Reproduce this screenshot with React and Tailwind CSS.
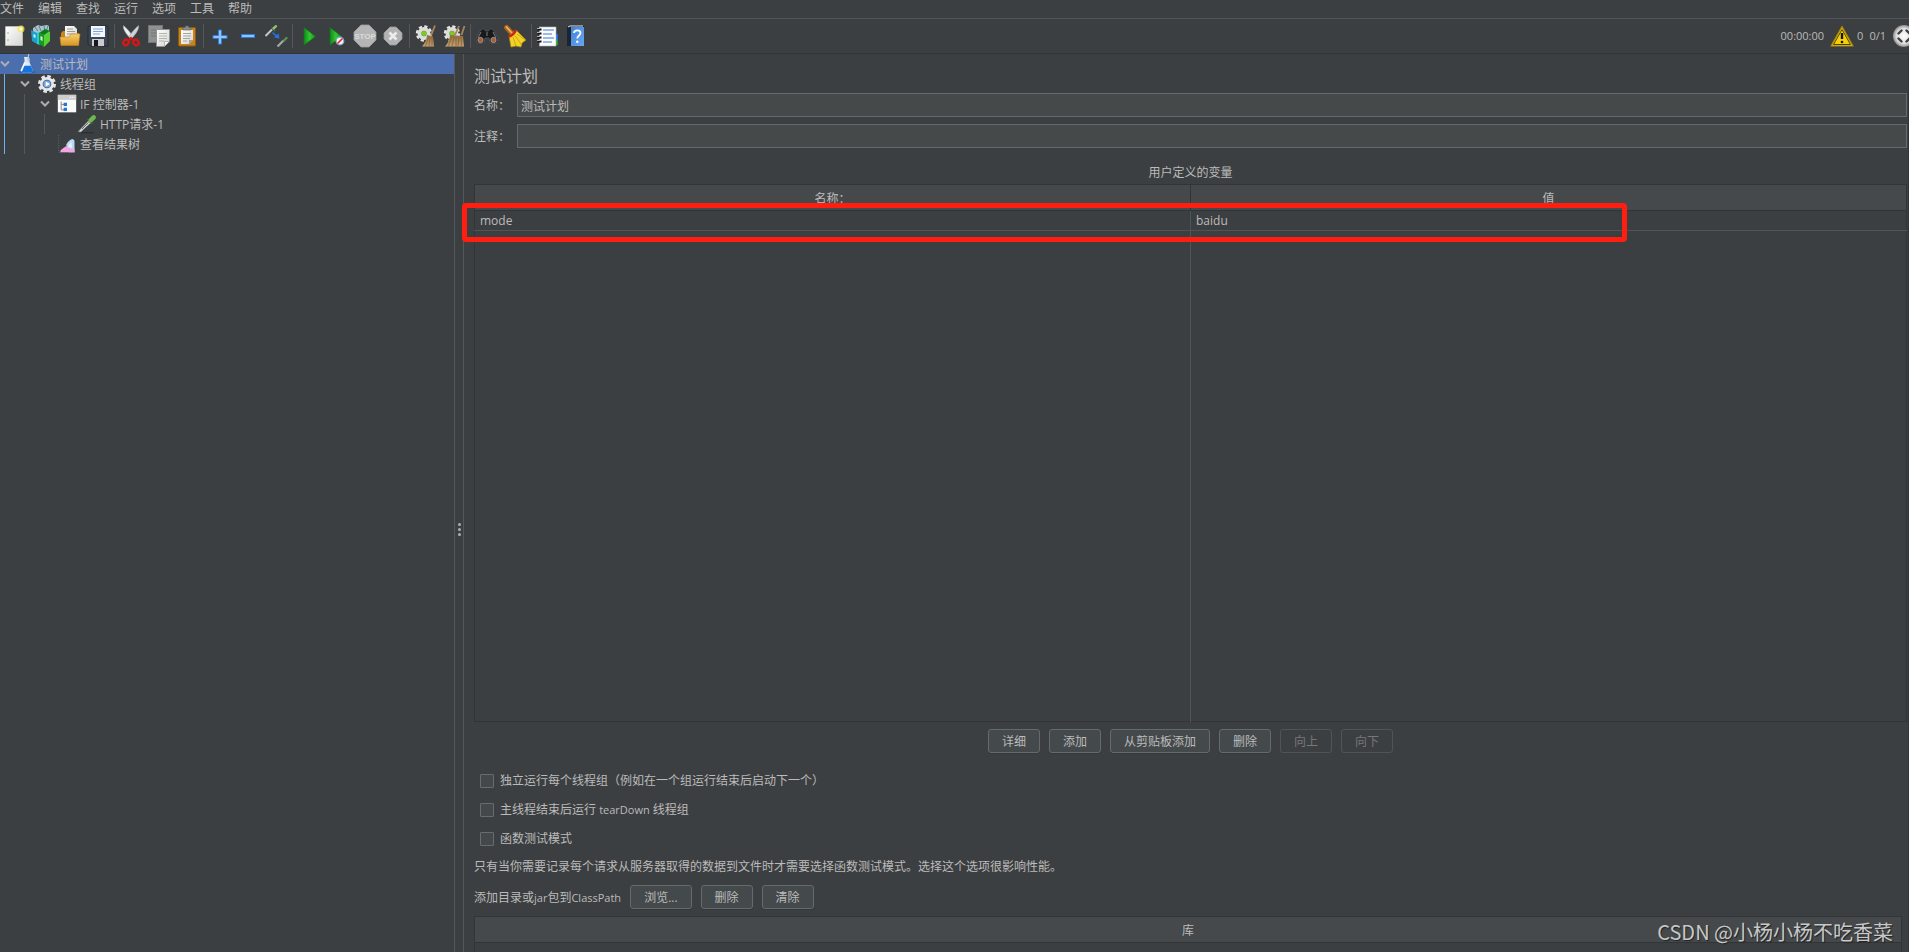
import React from 'react';

const menus = ['文件', '编辑', '查找', '运行', '选项', '工具', '帮助'];

const Svg = ({ children, className = 'h-6 w-6' }) => (
  <svg className={className} viewBox="0 0 24 24" fill="none" aria-hidden="true">
    {children}
  </svg>
);

/* Shared gradients for the icon set */
const Gradients = () => (
  <svg className="absolute h-0 w-0" aria-hidden="true">
    <defs>
      <linearGradient id="paper" x1="0" y1="0" x2="1" y2="1">
        <stop offset="0" stopColor="#ffffff" />
        <stop offset="1" stopColor="#d4d4d0" />
      </linearGradient>
      <linearGradient id="green" x1="0" y1="0" x2="1" y2="0">
        <stop offset="0" stopColor="#0f8a17" />
        <stop offset="0.5" stopColor="#35c436" />
        <stop offset="1" stopColor="#0b9a0f" />
      </linearGradient>
      <linearGradient id="folder" x1="0" y1="0" x2="0" y2="1">
        <stop offset="0" stopColor="#f7cf74" />
        <stop offset="1" stopColor="#d8951f" />
      </linearGradient>
      <linearGradient id="straw" x1="0" y1="0" x2="0" y2="1">
        <stop offset="0" stopColor="#8d6b42" />
        <stop offset="1" stopColor="#c9a26c" />
      </linearGradient>
      <linearGradient id="book" x1="0" y1="0" x2="1" y2="1">
        <stop offset="0" stopColor="#3f83dc" />
        <stop offset="1" stopColor="#6ba6ef" />
      </linearGradient>
      <radialGradient id="ball">
        <stop offset="0" stopColor="#ffffff" />
        <stop offset="0.7" stopColor="#dcdcdc" />
        <stop offset="1" stopColor="#8e8e8e" />
      </radialGradient>
    </defs>
  </svg>
);

const NewIcon = () => (
  <Svg>
    <rect x="3.5" y="2.5" width="17" height="19" rx="0.5" fill="url(#paper)" stroke="#b9b9b5" />
    <circle cx="6" cy="9" r="0.7" fill="#888" />
    <circle cx="6" cy="16" r="0.7" fill="#888" />
    <circle cx="19" cy="5" r="3.5" fill="#f5e74a" opacity="0.75" />
    <circle cx="19" cy="5" r="1.6" fill="#fffde0" />
  </Svg>
);

const TemplatesIcon = () => (
  <Svg>
    <path d="M3 4l5-3 3 1 6-1 2 1v7l-8 4-8-4z" fill="#a9c3cc" />
    <path d="M5 3l3 4M9 2l2 5M14 2l1 6M18 2l-2 6" stroke="#5f7f8c" />
    <path d="M1 6l6 3v11l-5-3z" fill="#19a3cc" />
    <path d="M7 9l3-1v13l-3-1z" fill="#36c0e6" />
    <path d="M3.5 10l2 1v3l-2-1z" fill="#d8f4fb" />
    <path d="M9 9l5 2v12l-5-3z" fill="#129b1c" />
    <path d="M14 11l6-4v10l-6 6z" fill="#57cf35" />
    <path d="M9 9l6-4 5 2-6 4z" fill="#0c7c18" />
    <path d="M10.5 12l2 1v4l-2-1z" fill="#d9f7d4" />
  </Svg>
);

const OpenIcon = () => (
  <Svg>
    <path d="M3 21V9l2-2h5l1 2h10v12z" fill="#c98716" />
    <path d="M7 2h9l3 3v9H7z" fill="url(#paper)" />
    <path d="M9 5h6M9 7.500h8M9 10h8" stroke="#9a9a98" />
    <path d="M2 13h9l2-3h9l-1.500 11.500H3z" fill="url(#folder)" stroke="#c3841b" strokeWidth="0.6" />
  </Svg>
);

const SaveIcon = () => (
  <Svg>
    <path d="M3 2h18l1 1v19H4l-2-2V3z" fill="#3c4552" stroke="#20262e" strokeWidth="0.8" />
    <rect x="5" y="2" width="14" height="11" fill="#f4f7fb" />
    <path d="M7 5h10M7 7.500h10M7 10h7" stroke="#7ea3d6" />
    <rect x="6" y="15" width="12" height="7" fill="#c9ccd0" />
    <rect x="8" y="16" width="4" height="6" fill="#15181c" />
  </Svg>
);

const CutIcon = () => (
  <Svg>
    <path d="M4.500 1.500c-1 3.500 3 9 7.500 13.500l2-2.500C11.500 8.500 8 4.500 4.500 1.500z" fill="#eceeef" stroke="#9a9ea1" strokeWidth="0.6" />
    <path d="M19.500 1.500c1 3.500-3 9-7.500 13.500l-2-2.500c2.500-4 6-8 9.500-11z" fill="#d2d5d7" stroke="#9a9ea1" strokeWidth="0.6" />
    <ellipse cx="7" cy="18.500" rx="2.600" ry="3" stroke="#dc1414" strokeWidth="2.200" transform="rotate(35 7 18.500)" />
    <ellipse cx="17" cy="18.500" rx="2.600" ry="3" stroke="#dc1414" strokeWidth="2.200" transform="rotate(-35 17 18.500)" />
    <path d="M10 16l2-2 2 2" stroke="#dc1414" strokeWidth="2" />
  </Svg>
);

const CopyIcon = () => (
  <Svg>
    <rect x="1.500" y="1.500" width="14" height="17" fill="#8f9290" stroke="#747775" />
    <path d="M4 6h9M4 9h9M4 12h5" stroke="#737674" />
    <path d="M9.500 5.500h13v12l-5 5h-8z" fill="url(#paper)" stroke="#8f928f" />
    <path d="M12 9.500h8M12 12h8M12 14.500h8M12 17h5" stroke="#b3b5b1" />
    <path d="M22.500 17.500h-5v5z" fill="#f7f7f5" stroke="#8f928f" strokeWidth="0.6" />
  </Svg>
);

const PasteIcon = () => (
  <Svg>
    <rect x="3.500" y="3.500" width="17" height="18.500" rx="1" fill="#c9831c" stroke="#8f5a0c" />
    <path d="M6 6h12v10l-4 4H6z" fill="url(#paper)" />
    <path d="M8 9.500h8M8 12h8M8 14.500h7M8 17h4" stroke="#a5a7a3" />
    <path d="M18 16h-4v4z" fill="#9f9f9b" />
    <path d="M8 6V3.500h2.500V2h3v1.500H16V6z" fill="#8b8e8b" stroke="#5d605d" strokeWidth="0.6" />
  </Svg>
);

const PlusIcon = () => (
  <Svg>
    <path d="M10.500 6h3v5.500H19v3h-5.500V20h-3v-5.500H5v-3h5.500z" fill="#8fc3f7" stroke="#2f7ddb" />
  </Svg>
);

const MinusIcon = () => (
  <Svg>
    <rect x="5.500" y="10.500" width="13" height="3" fill="#8fc3f7" stroke="#2f7ddb" />
  </Svg>
);

const ToggleIcon = () => (
  <Svg>
    <path d="M1.500 12L8 5.500" stroke="#c4c9c7" strokeWidth="2" />
    <path d="M7.500 3.500l3.500 3.500" stroke="#4c6b40" strokeWidth="1.200" />
    <path d="M9.500 4.500L12 2.200" stroke="#8cc471" strokeWidth="2.400" strokeLinecap="round" />
    <path d="M8.500 8.500l4 3.500" stroke="#2574e6" strokeWidth="1.600" />
    <path d="M15.500 14.500l-5.500-1 4.500-4z" fill="#2574e6" />
    <path d="M13.500 22.500l6-6" stroke="#a5aaa8" strokeWidth="2.200" />
    <path d="M20 16.500l2.500-2.500" stroke="#5f8f4c" strokeWidth="2.400" strokeLinecap="round" />
  </Svg>
);

const StartIcon = () => (
  <Svg>
    <path d="M7 3.500l11.500 9L7 21z" fill="url(#green)" stroke="#0a7d10" strokeWidth="0.6" />
  </Svg>
);

const StartNoPauseIcon = () => (
  <Svg>
    <path d="M5 3.500l11.500 9L5 21z" fill="url(#green)" stroke="#0a7d10" strokeWidth="0.6" />
    <circle cx="15" cy="17" r="3.800" fill="#f1f4f8" stroke="#8aa9d0" strokeWidth="1.200" />
    <path d="M12.500 19.500l5-5" stroke="#dd2222" strokeWidth="1.600" />
  </Svg>
);

const StopIcon = () => (
  <Svg>
    <path d="M8 1h8l7 7v8l-7 7H8l-7-7V8z" fill="#b5b5b5" stroke="#9c9c9c" strokeWidth="0.8" />
    <text x="12" y="15" textAnchor="middle" fontSize="8" fontWeight="bold" fontFamily="Liberation Sans, sans-serif" fill="#dadada">
      STOP
    </text>
  </Svg>
);

const ShutdownIcon = () => (
  <Svg>
    <path d="M9 3h6l6 6v6l-6 6H9l-6-6V9z" fill="#b3b3b3" stroke="#9a9a9a" strokeWidth="0.8" />
    <path d="M8.500 8.500l7 7M15.500 8.500l-7 7" stroke="#ededed" strokeWidth="2.600" />
  </Svg>
);

const Gear = ({ cx, cy }) => (
  <>
    <circle cx={cx} cy={cy} r="7" stroke="#e6e6e4" strokeWidth="2.400" strokeDasharray="3.200 2.300" />
    <circle cx={cx} cy={cy} r="6.400" fill="#dcdcda" />
    <circle cx={cx} cy={cy} r="2.500" fill="#7ccc28" stroke="#5c9b20" strokeWidth="0.6" />
  </>
);

const ClearIcon = () => (
  <Svg>
    <Gear cx="10" cy="9.500" />
    <path d="M21 1.500l-4 10" stroke="#a88457" strokeWidth="1.800" />
    <path d="M13 11l6 1.500 1 10H8c3-3 4.500-7 5-11.500z" fill="url(#straw)" />
    <path d="M14.500 13l-3 9M16 13l-1 9M18 13v9" stroke="#7d5b33" strokeWidth="0.7" />
  </Svg>
);

const ClearAllIcon = () => (
  <Svg>
    <Gear cx="10" cy="9.500" />
    <path d="M17 2l-4 9M22.500 2l-3 9" stroke="#a88457" strokeWidth="1.800" />
    <path d="M8 11l13 1 1 10.500H3c3-3 4.500-7 5-11.500z" fill="url(#straw)" />
    <path d="M9.500 13l-3 9M12 13l-2 9M14 13v9M17 13l-1 9M19 13l.5 9" stroke="#7d5b33" strokeWidth="0.700" />
  </Svg>
);

const SearchIcon = () => (
  <Svg>
    <path d="M5 7l3-2.500L11 7h2l3-2.500L19 7l4 8-1 4h-7l-1-5h-4l-1 5H2l-1-4z" fill="#17191b" stroke="#54585b" strokeWidth="0.800" />
    <path d="M6 8l-3 6M18 8l3 6M12 8v4" stroke="#7b8083" />
    <circle cx="5.500" cy="16" r="2.700" fill="#a4603a" stroke="#a9a9a9" strokeWidth="0.700" />
    <circle cx="18.500" cy="16" r="2.700" fill="#a4603a" stroke="#a9a9a9" strokeWidth="0.700" />
  </Svg>
);

const BroomIcon = () => (
  <Svg>
    <path d="M3.500 3.500l6 6.500" stroke="#a8641b" strokeWidth="5" strokeLinecap="round" />
    <path d="M3.500 3l5 5.500" stroke="#eeb25a" strokeWidth="1.800" strokeLinecap="round" />
    <path d="M6 12l7-6 10 10-4 3-1 4-5-1-5 1z" fill="#f2d224" stroke="#b58f0c" strokeWidth="0.700" />
    <path d="M10 13l3 9M12 11.500l6 8.500M14 10l8 6" stroke="#c9a012" strokeWidth="0.900" />
    <path d="M5.500 12.500c3-.5 6-3 7.500-6.500" stroke="#d51f1f" strokeWidth="2.400" />
  </Svg>
);

const ListIcon = () => (
  <Svg>
    <rect x="17" y="10" width="5" height="6" fill="#1e6de0" />
    <rect x="17" y="16" width="5" height="5" fill="#1fa02c" />
    <rect x="3.500" y="3" width="16.500" height="19" fill="#fbfbfb" stroke="#b5b5b5" strokeWidth="0.600" />
    <path d="M7 6h11M7 10h9M7 14h11M7 18h9" stroke="#3a7bd9" strokeWidth="1.200" />
    <path d="M1.500 5.500h4M1.500 9.500h4M1.500 13.500h4M1.500 17.500h4" stroke="#101010" strokeWidth="1.800" />
    <path d="M1 4.500h3M1 8.500h3M1 12.500h3M1 16.500h3" stroke="#d0d0d0" strokeWidth="0.800" />
  </Svg>
);

const HelpIcon = () => (
  <Svg>
    <path d="M3 3l3-1h14v20H3z" fill="#1b2433" />
    <path d="M4 3l2-1h13" stroke="#dfe4ea" />
    <rect x="7" y="3" width="13" height="19" fill="url(#book)" />
    <path d="M10 9c0-3.500 6.500-3.500 6.500 0 0 2.500-3.200 2.500-3.200 5.500" stroke="#fff" strokeWidth="1.800" />
    <circle cx="13.300" cy="17.800" r="1.200" fill="#fff" />
  </Svg>
);

const WarningIcon = () => (
  <Svg>
    <path d="M12 2.500L23 22H1z" fill="#f7ce0a" stroke="#a98a04" strokeWidth="1.200" strokeLinejoin="round" />
    <path d="M12 5.500L20.500 20.500h-17z" stroke="#3a3105" strokeWidth="0.900" />
    <path d="M12 9v6" stroke="#141414" strokeWidth="2.400" />
    <circle cx="12" cy="18" r="1.300" fill="#141414" />
  </Svg>
);

const ThreadsIcon = () => (
  <Svg className="h-6 w-6 shrink-0">
    <circle cx="12" cy="12" r="11" fill="url(#ball)" />
    <path d="M6.500 9.500l3-3M14.500 6.500l3 3M17.500 14.500l-3 3M9.500 17.500l-3-3" stroke="#404040" strokeWidth="2.400" strokeLinecap="round" />
  </Svg>
);

/* Tree icons */
const FlaskIcon = () => (
  <Svg className="h-5 w-5">
    <ellipse cx="12" cy="21.500" rx="10" ry="2" fill="#2f5fae" />
    <path d="M9 5h6v5l4.500 11c-3 2-12 2-15 0L9 10z" fill="#dce9f4" />
    <path d="M7.500 14h9l3 7c-3 2-12 2-15 0z" fill="#1873d8" />
    <path d="M5 20.500L9.500 10" stroke="#f7fbff" strokeWidth="2" />
    <path d="M8.500 4.500h6" stroke="#f7fbff" strokeWidth="1.500" />
    <path d="M14 0l-1 9" stroke="#b6c2cc" strokeWidth="1.500" />
  </Svg>
);

const ThreadGroupIcon = () => (
  <Svg className="h-5 w-5">
    <circle cx="12" cy="12" r="9" stroke="#e4e4e4" strokeWidth="3.600" strokeDasharray="4.200 2.870" />
    <circle cx="12" cy="12" r="6.800" fill="#2d5c9c" stroke="#e8e8e8" strokeWidth="3.200" />
    <circle cx="12" cy="12" r="4.300" fill="#7fa7d8" />
    <path d="M10.500 9l5 3-5 3z" fill="#fff" />
  </Svg>
);

const ControllerIcon = () => (
  <Svg className="h-5 w-5">
    <rect x="1" y="1" width="22" height="21" fill="#fafafa" />
    <rect x="1" y="1" width="22" height="6" fill="#cdcdcd" />
    <path d="M15 4h6" stroke="#f5f5f5" strokeWidth="1.500" strokeDasharray="1.500 1" />
    <path d="M5 9v10h4M5 12.500h4" stroke="#8a8a8a" strokeWidth="1.200" />
    <rect x="8" y="10.500" width="4" height="4" fill="#2677c9" />
    <rect x="8" y="16.500" width="4" height="4" fill="#2677c9" />
  </Svg>
);

const SamplerIcon = () => (
  <Svg className="h-5 w-5">
    <path d="M4 22.500h16" stroke="#2b2d2f" strokeWidth="1.500" />
    <path d="M1.500 21L14 8l2.500 2.500L4.500 21.500z" fill="#d9dedc" stroke="#8b908e" strokeWidth="0.800" />
    <path d="M6 18l8-8" stroke="#55595a" />
    <path d="M12.500 6l5.500 5.500" stroke="#3b6d2b" strokeWidth="2" />
    <path d="M16.500 7.500L20 4" stroke="#6fb552" strokeWidth="5.500" strokeLinecap="round" />
  </Svg>
);

const ResultsIcon = () => (
  <Svg className="h-5 w-5">
    <path d="M2 1v21h19" stroke="#66696b" strokeDasharray="1.500 1.500" />
    <path d="M11 13c2-4 5-7 8-7l2 2v14h-7z" fill="#b9d7f4" />
    <path d="M4 22c0-4 3-4 5-6 2-2 3-2 5 1l7 1v4z" fill="#f2a5e4" />
    <path d="M13 15l4-6 1 8z" fill="#e9f3fd" />
  </Svg>
);

const toolbar = [
  [['新建', NewIcon], ['模板', TemplatesIcon], ['打开', OpenIcon], ['保存', SaveIcon]],
  [['剪切', CutIcon], ['复制', CopyIcon], ['粘贴', PasteIcon]],
  [['展开', PlusIcon], ['折叠', MinusIcon], ['切换', ToggleIcon]],
  [['启动', StartIcon], ['不停顿开始', StartNoPauseIcon], ['停止', StopIcon], ['关闭', ShutdownIcon]],
  [['清除', ClearIcon], ['清除全部', ClearAllIcon]],
  [['搜索', SearchIcon], ['重置搜索', BroomIcon]],
  [['函数助手', ListIcon], ['帮助', HelpIcon]],
];

const Chevron = () => (
  <svg className="h-[10px] w-[10px]" viewBox="0 0 10 10" fill="none" aria-hidden="true">
    <path d="M1 2.500l4 4 4-4" stroke="#adadad" strokeWidth="2" />
  </svg>
);

const TreeRow = ({ icon: Icon, label, open, selected }) => (
  <div className={`flex h-5 items-center whitespace-nowrap ${selected ? 'bg-[#4b6eaf]' : ''}`}>
    {open && (
      <span className="w-[17px] shrink-0">
        <Chevron />
      </span>
    )}
    <Icon />
    <span className="ml-[3px] pt-[2px]">{label}</span>
  </div>
);

const Button = ({ children, disabled }) => (
  <button
    type="button"
    disabled={disabled}
    className="h-6 rounded-[3px] border border-[#666a6b] bg-[#44494b] px-[13px] pt-[2px] leading-5 shadow-[0_1px_0_#35383a] disabled:border-[#515456] disabled:bg-transparent disabled:text-[#777] disabled:shadow-none"
  >
    {children}
  </button>
);

const Field = ({ id, label, value }) => (
  <div className="flex items-center">
    <label htmlFor={id} className="w-[43px] shrink-0 pt-[2px]">{label}</label>
    <input
      id={id}
      type="text"
      defaultValue={value}
      className="h-6 min-w-0 flex-1 border border-[#66696a] bg-[#45494a] px-[3px] pt-[2px] outline-none"
    />
  </div>
);

const Check = ({ id, children }) => (
  <div className="flex h-[29px] items-center pl-[6px]">
    <input id={id} type="checkbox" className="h-[14px] w-[14px] appearance-none rounded-[1px] border border-[#6b6b6b] bg-[#43494a]" />
    <label htmlFor={id} className="ml-[6px] pt-px">{children}</label>
  </div>
);

const App = () => {
  return (
    <div className="relative flex h-screen flex-col overflow-hidden bg-[#3c3f41] font-['Open_Sans','Noto_Sans_CJK_SC',sans-serif] text-[12px] leading-4 text-[#bbbbbb]">
      <Gradients />

      {/* Menu bar */}
      <nav className="flex h-[19px] shrink-0 gap-[14px] border-b border-[#515456] pt-px">
        {menus.map((m) => (
          <button key={m} type="button" className="h-4">{m}</button>
        ))}
      </nav>

      {/* Toolbar */}
      <div className="flex h-[35px] shrink-0 items-center border-b border-[#323537]">
        {toolbar.map((group, i) => (
          <div key={i} className="flex items-center">
            {i > 0 && <span className="mx-[2px] h-6 w-px bg-[#55585a]" />}
            {group.map(([name, Icon]) => (
              <button key={name} type="button" aria-label={name} className="flex h-7 w-7 items-center justify-center">
                <Icon />
              </button>
            ))}
          </div>
        ))}
        <div className="ml-auto flex items-center">
          <span className="mr-[6px] text-[11px]">00:00:00</span>
          <WarningIcon />
          <span className="ml-[3px] text-[11px]">0</span>
          <span className="mx-[6px] text-[11px]">0/1</span>
          <span className="flex w-[17px] overflow-visible">
            <ThreadsIcon />
          </span>
        </div>
      </div>

      <div className="flex min-h-0 flex-1">
        {/* Test plan tree */}
        <aside className="w-[455px] shrink-0 border-r border-[#55585a]">
          <TreeRow icon={FlaskIcon} label="测试计划" open selected />
          <div className="ml-1 border-l border-[#6fb1ee] pl-[15px]">
            <TreeRow icon={ThreadGroupIcon} label="线程组" open />
            <div className="ml-1 border-l border-[#55585a] pl-[15px]">
              <TreeRow icon={ControllerIcon} label="IF 控制器-1" open />
              <div className="ml-1 border-l border-[#55585a] pl-8">
                <TreeRow icon={SamplerIcon} label="HTTP请求-1" />
              </div>
              <div className="pl-[17px]">
                <TreeRow icon={ResultsIcon} label="查看结果树" />
              </div>
            </div>
          </div>
        </aside>

        {/* Split handle */}
        <div className="flex w-[9px] shrink-0 flex-col items-center justify-center gap-[2px] border-r border-[#55585a] pt-[53px]">
          <span className="h-[3px] w-[3px] rounded-full bg-[#adadad]" />
          <span className="h-[3px] w-[3px] rounded-full bg-[#adadad]" />
          <span className="h-[3px] w-[3px] rounded-full bg-[#adadad]" />
        </div>

        {/* Editor */}
        <main className="flex min-w-0 flex-1 flex-col border-r border-[#323537] pl-[10px] pr-px pt-2">
          <h1 className="mb-[3px] text-[16px] leading-7">测试计划</h1>
          <div className="flex flex-col gap-[7px]">
            <Field id="name" label="名称：" value="测试计划" />
            <Field id="comment" label="注释：" value="" />
          </div>

          <h2 className="mb-[3px] mt-[17px] text-center">用户定义的变量</h2>
          <div className="relative min-h-0 flex-1">
            <table className="h-full w-full table-fixed border-collapse border border-[#323537]">
              <thead>
                <tr className="h-[26px] bg-[#45494b]">
                  <th className="border border-[#323537] p-0 pt-[2px] font-normal">名称：</th>
                  <th className="border border-[#323537] p-0 pt-[2px] font-normal">值</th>
                </tr>
              </thead>
              <tbody>
                <tr className="h-5">
                  <td className="border-b border-r border-[#515456] px-[5px] py-0">mode</td>
                  <td className="border-b border-[#515456] px-[5px] py-0">baidu</td>
                </tr>
                <tr>
                  <td className="border-r border-[#515456] p-0" />
                  <td className="p-0" />
                </tr>
              </tbody>
            </table>
            {/* Highlight around the variable row */}
            <div className="absolute -left-3 right-[280px] top-[19px] h-[39px] rounded-[4px] border-[5px] border-[#ff1e10]" />
          </div>

          <div className="mt-[7px] flex shrink-0 justify-center gap-[9px]">
            <Button>详细</Button>
            <Button>添加</Button>
            <Button>从剪贴板添加</Button>
            <Button>删除</Button>
            <Button disabled>向上</Button>
            <Button disabled>向下</Button>
          </div>

          <div className="mt-[13px]">
            <Check id="serial">独立运行每个线程组（例如在一个组运行结束后启动下一个）</Check>
            <Check id="teardown">
              主线程结束后运行 <span className="text-[11px]">tearDown</span> 线程组
            </Check>
            <Check id="functional">函数测试模式</Check>
          </div>
          <p className="pt-[2px] leading-6">只有当你需要记录每个请求从服务器取得的数据到文件时才需要选择函数测试模式。选择这个选项很影响性能。</p>

          <div className="mb-[7px] mt-[6px] flex items-center gap-[9px]">
            <span className="pt-[2px]">
              添加目录或<span className="text-[11px]">jar</span>包到<span className="text-[11px]">ClassPath</span>
            </span>
            <Button>浏览...</Button>
            <Button>删除</Button>
            <Button>清除</Button>
          </div>

          <div className="mr-[5px] h-9 shrink-0 border-x border-t border-[#323537]">
            <div className="border-b border-[#323537] bg-[#45494b] pt-[2px] text-center leading-[23px]">库</div>
          </div>
        </main>
      </div>

      {/* Watermark */}
      <div className="absolute bottom-1 right-4 text-[20px] leading-8 text-[#c6c8c9] font-['Noto_Sans_CJK_SC',sans-serif] [text-shadow:1px_1px_1px_#222]">
        CSDN @小杨小杨不吃香菜
      </div>
    </div>
  );
};

export default App;
